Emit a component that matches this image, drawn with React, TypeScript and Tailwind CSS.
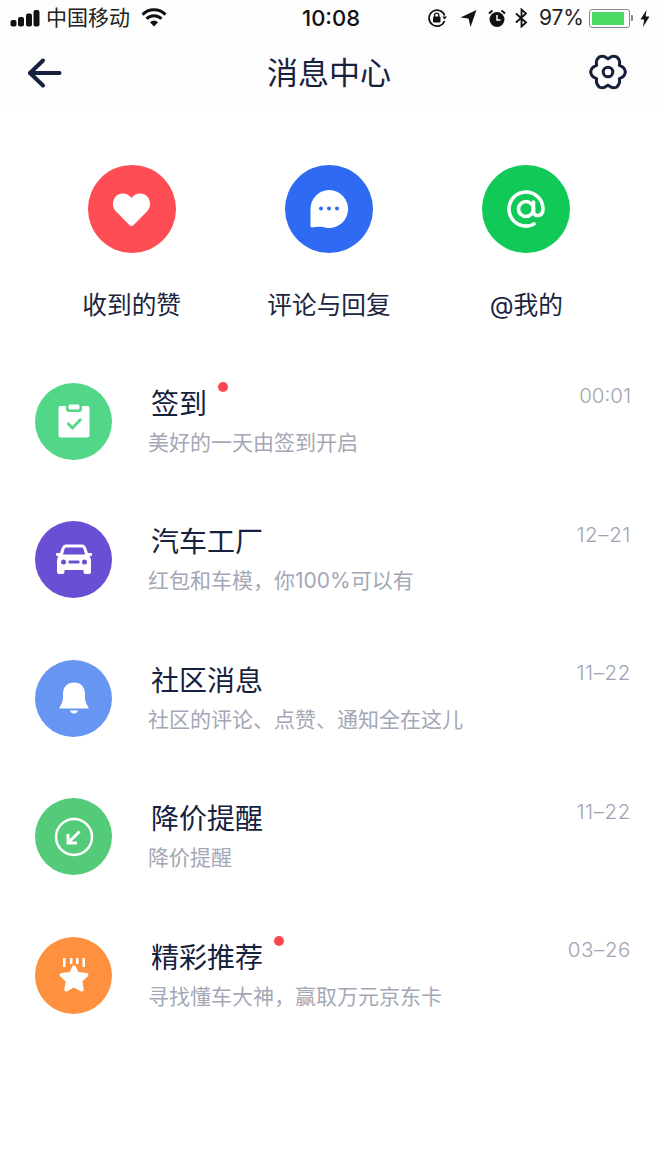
import type { ReactNode } from 'react';

const FONT = "font-['Inter','Noto_Sans_CJK_SC',sans-serif]";

// six rounded lobes, dips at top and bottom
function gearPath() {
  const p = (r: number, deg: number) => {
    const a = (deg * Math.PI) / 180;
    return `${(20 + r * Math.cos(a)).toFixed(2)} ${(20 + r * Math.sin(a)).toFixed(2)}`;
  };
  let d = `M${p(13.2, -30)}`;
  for (let i = 0; i < 6; i++) {
    const a = i * 60;
    d += ` C${p(14, a - 22)} ${p(17.4, a - 21)} ${p(17.4, a)}`;
    d += ` C${p(17.4, a + 21)} ${p(14, a + 22)} ${p(13.2, a + 30)}`;
  }
  return `${d} Z`;
}

function StatusBar() {
  return (
    <div className="flex items-center justify-between h-[36px] pl-[10px] pr-[8px] text-[#111] bg-[#fdfdfd]">
      <div className="flex items-center w-[220px]">
        <svg width="30" height="18" viewBox="0 0 30 18" fill="#111">
          <rect x="0.5" y="11" width="6" height="6.5" rx="2" />
          <rect x="8" y="8" width="6" height="9.5" rx="2" />
          <rect x="16" y="4.5" width="6" height="13" rx="2" />
          <rect x="23.5" y="1" width="6" height="16.5" rx="2" />
        </svg>
        <span className="ml-[6px] text-[21px] leading-[28px] text-[#222]">中国移动</span>
        <svg className="ml-[11px]" width="26" height="20" viewBox="0 0 26 20" fill="none" stroke="#111" strokeWidth="3">
          <path d="M1.5 6.6 A16 16 0 0 1 24.5 6.6" />
          <path d="M5.5 10.8 A10.5 10.5 0 0 1 20.5 10.8" />
          <path d="M13 18.5 L9 14.2 A5.6 5.6 0 0 1 17 14.2 Z" fill="#111" stroke="none" />
        </svg>
      </div>
      <span className="text-[22px] leading-[28px] font-medium text-[#111] absolute left-[302px]">10:08</span>
      <div className="flex items-center">
        <svg width="20" height="20" viewBox="0 0 20 20" fill="none">
          <path d="M17.5 13 A8 8 0 1 1 17.6 7.5" stroke="#111" strokeWidth="1.7" />
          <path d="M15.2 8.5 L20 8.5 L17.6 11.5 Z" fill="#111" />
          <rect x="6" y="8.6" width="7.5" height="6" rx="1" fill="#111" />
          <path d="M7.6 9 V7.2 A2.1 2.1 0 0 1 11.8 7.2 V9" stroke="#111" strokeWidth="1.3" />
        </svg>
        <svg className="ml-[13px]" width="17" height="19" viewBox="0 0 17 19" fill="#111">
          <path d="M16.5 1 L10.5 18 L8.5 9.5 L0.5 8.5 Z" />
        </svg>
        <svg className="ml-[11px]" width="18" height="19" viewBox="0 0 18 19">
          <circle cx="9" cy="10.5" r="7.5" fill="#111" />
          <path d="M9 6 V11 H12.5" stroke="#fff" strokeWidth="1.5" fill="none" />
          <path d="M1 4.5 L4.5 1.5 M17 4.5 L13.5 1.5" stroke="#111" strokeWidth="2" />
        </svg>
        <svg className="ml-[9px]" width="13" height="20" viewBox="0 0 13 20" fill="none" stroke="#111" strokeWidth="1.8">
          <path d="M1 5.5 L11 14.5 L6.5 18.5 V1.5 L11 5.5 L1 14.5" />
        </svg>
        <span className="ml-[11px] text-[21px] leading-[28px] text-[#222]">97%</span>
        <div className="ml-[5px] w-[41px] h-[19px] rounded-[3px] border border-[#8a8a8a] p-[2px]">
          <div className="h-full w-[92%] bg-[#4cd964] rounded-[1px]" />
        </div>
        <div className="ml-[1px] w-[2px] h-[6px] bg-[#8a8a8a] rounded-r-[1px]" />
        <svg className="ml-[7px]" width="10" height="17" viewBox="0 0 10 17" fill="#111">
          <path d="M6.5 0 L0.5 9.5 H4.2 L3 17 L9.5 6.5 H5.6 Z" />
        </svg>
      </div>
    </div>
  );
}

function Header() {
  return (
    <div className="relative flex items-center justify-between h-[74px] pl-[27px] pr-[30px] bg-[#fdfdfd]">
      <svg width="36" height="32" viewBox="0 0 36 32" fill="none" stroke="#16213e" strokeWidth="4" strokeLinecap="round" strokeLinejoin="round">
        <path d="M3 16 H32.5" />
        <path d="M16 3.5 L3 16 L16 28.5" />
      </svg>
      <h1 className="absolute left-0 right-0 text-center text-[31px] leading-[40px] text-[#16213e] pointer-events-none">消息中心</h1>
      <svg className="-mt-[2px]" width="40" height="40" viewBox="0 0 40 40" fill="none" stroke="#16213e" strokeWidth="3" strokeLinejoin="round">
        <path d={gearPath()} />
        <circle cx="20" cy="20" r="4.8" />
      </svg>
    </div>
  );
}

const tabs: { label: string; color: string; icon: ReactNode }[] = [
  {
    label: '收到的赞',
    color: 'bg-[#ff4d55]',
    icon: (
      <svg width="39" height="35" viewBox="0 0 42 38" fill="#fff">
        <path d="M21 37 C20 37 19.5 36.5 19 36 L4 21 C0 17 0 10 3 6 C7 0.5 16 0 21 6.5 C26 0 35 0.5 39 6 C42 10 42 17 38 21 L23 36 C22.5 36.5 22 37 21 37 Z" />
      </svg>
    ),
  },
  {
    label: '评论与回复',
    color: 'bg-[#2f6bf2]',
    icon: (
      <svg width="40" height="40" viewBox="0 0 40 40">
        <path d="M20 1 A19 19 0 1 1 14 38 C10 37.5 5 38.5 3 38.5 C1.5 38.5 1.5 37 1.5 36 L1.5 20 A19 19 0 0 1 20 1 Z" fill="#fff" />
        <circle cx="12" cy="19.5" r="2" fill="#2f6bf2" />
        <circle cx="20" cy="19.5" r="2" fill="#2f6bf2" />
        <circle cx="28" cy="19.5" r="2" fill="#2f6bf2" />
      </svg>
    ),
  },
  {
    label: '@我的',
    color: 'bg-[#10c957]',
    icon: (
      <svg width="38" height="38" viewBox="0 0 38 38" fill="none" stroke="#fff" strokeWidth="3.6" strokeLinecap="round">
        <circle cx="19" cy="19" r="7.5" />
        <path d="M26.5 12 V21.5 C26.5 27.5 36 27 36 19 A17 17 0 1 0 27 34" />
      </svg>
    ),
  },
];

function Tabs() {
  return (
    <div className="grid grid-cols-3 px-[33px] pt-[55px]">
      {tabs.map((t) => (
        <div key={t.label} className="flex flex-col items-center">
          <div className={`w-[88px] h-[88px] rounded-full flex items-center justify-center ${t.color}`}>{t.icon}</div>
          <span className="mt-[35px] text-[24.7px] leading-[34px] text-[#1c2540]">{t.label}</span>
        </div>
      ))}
    </div>
  );
}

const rows: { title: string; sub: string; time: string; color: string; dot?: string; icon: ReactNode }[] = [
  {
    title: '签到',
    sub: '美好的一天由签到开启',
    time: '00:01',
    color: 'bg-[#52d688]',
    dot: 'left-[70px]',
    icon: (
      <svg width="32" height="34" viewBox="0 0 32 34">
        <path d="M2.5 2 H8 V5 A3 3 0 0 0 11 8 H21 A3 3 0 0 0 24 5 V2 H29.5 A2 2 0 0 1 31.5 4 V31.5 A2 2 0 0 1 29.5 33.5 H2.5 A2 2 0 0 1 0.5 31.5 V4 A2 2 0 0 1 2.5 2 Z" fill="#fff" />
        <rect x="10.5" y="0.5" width="11" height="5" rx="1.5" fill="#fff" />
        <path d="M9.5 19 L14.5 24 L23 15" fill="none" stroke="#52d688" strokeWidth="2.8" />
      </svg>
    ),
  },
  {
    title: '汽车工厂',
    sub: '红包和车模，你100%可以有',
    time: '12–21',
    color: 'bg-[#6a4fd4]',
    icon: (
      <svg width="36" height="32" viewBox="0 0 36 32">
        <path d="M10 0.5 H26 C28 0.5 29 1.5 30 3.5 L32 9 H35 A1 1 0 0 1 36 10 V11.5 L33.5 12.5 C34.5 14 35 15 35 17 V28 A2 2 0 0 1 33 30 H29.5 A2 2 0 0 1 27.5 28 V26 H8.5 V28 A2 2 0 0 1 6.5 30 H3 A2 2 0 0 1 1 28 V17 C1 15 1.5 14 2.5 12.5 L0 11.5 V10 A1 1 0 0 1 1 9 H4 L6 3.5 C7 1.5 8 0.5 10 0.5 Z" fill="#fff" />
        <path d="M10.5 3.5 H25.5 C26.5 3.5 27 4 27.5 5 L29 10.5 H7 L8.5 5 C9 4 9.5 3.5 10.5 3.5 Z" fill="#6a4fd4" />
        <circle cx="7.5" cy="18" r="2.5" fill="#6a4fd4" />
        <circle cx="28.5" cy="18" r="2.5" fill="#6a4fd4" />
        <rect x="12.5" y="16.5" width="11" height="3" rx="1" fill="#6a4fd4" />
      </svg>
    ),
  },
  {
    title: '社区消息',
    sub: '社区的评论、点赞、通知全在这儿',
    time: '11–22',
    color: 'bg-[#6695f2]',
    icon: (
      <svg width="30" height="32" viewBox="0 0 30 32" fill="#fff">
        <path d="M15 0.5 C8 0.5 4 5 4 12 V16 C4 20 2 23 0.5 25.5 Q0 26.5 1 26.5 H29 Q30 26.5 29.5 25.5 C28 23 26 20 26 16 V12 C26 5 22 0.5 15 0.5 Z" />
        <path d="M11 28.5 H19 C18.5 30.5 17 31.5 15 31.5 C13 31.5 11.5 30.5 11 28.5 Z" />
      </svg>
    ),
  },
  {
    title: '降价提醒',
    sub: '降价提醒',
    time: '11–22',
    color: 'bg-[#54cb78]',
    icon: (
      <svg width="40" height="40" viewBox="0 0 40 40" fill="none" stroke="#fff">
        <circle cx="20" cy="20" r="18" strokeWidth="2.5" />
        <path d="M25.5 14.5 L15 25" strokeWidth="3" />
        <path d="M14 17 V26 H23" strokeWidth="3" />
      </svg>
    ),
  },
  {
    title: '精彩推荐',
    sub: '寻找懂车大神，赢取万元京东卡',
    time: '03–26',
    color: 'bg-[#fd9140]',
    dot: 'left-[126px]',
    icon: (
      <svg width="30" height="34" viewBox="0 0 30 34" fill="#fff">
        <rect x="4" y="0" width="2.5" height="9" />
        <rect x="11" y="0" width="2.5" height="6" />
        <rect x="17" y="0" width="2.5" height="6" />
        <rect x="23.5" y="0" width="2.5" height="9" />
        <path d="M15 7.5 C16 7.5 16.5 8 17 9 L19.3 14 L27.5 15 C29.5 15.3 30 17 28.8 18.3 L23.3 23.5 L24.7 31 C25 33 23.5 34 21.8 33.2 L15 29.5 L8.2 33.2 C6.5 34 5 33 5.3 31 L6.7 23.5 L1.2 18.3 C0 17 0.5 15.3 2.5 15 L10.7 14 L13 9 C13.5 8 14 7.5 15 7.5 Z" />
      </svg>
    ),
  },
];

function Row({ row }: { row: (typeof rows)[number] }) {
  return (
    <div className="flex items-center h-[138.5px] pl-[35px] pr-[27px]">
      <div className={`w-[77px] h-[77px] shrink-0 rounded-full flex items-center justify-center ${row.color}`}>{row.icon}</div>
      <div className="ml-[36px] flex-1 min-w-0">
        <div className="relative h-[38px] pl-[3px] text-[28px] leading-[38px] text-[#16213e]">
          {row.title}
          {row.dot && <span className={`absolute top-[-3px] w-[10px] h-[10px] rounded-full bg-[#ff4550] ${row.dot}`} />}
        </div>
        <div className="mt-[5px] text-[21px] leading-[30px] text-[#a4a7b5]">{row.sub}</div>
      </div>
      <span className={`self-start mt-[29px] text-[20.5px] leading-[30px] font-light text-[#a0a3b1] ${row.time.includes('–') ? 'tracking-[0.6px]' : ''}`}>{row.time}</span>
    </div>
  );
}

export default function App() {
  return (
    <div className={`relative w-[658px] h-[1170px] bg-white overflow-hidden ${FONT}`}>
      <StatusBar />
      <Header />
      <Tabs />
      <div className="mt-[30px]">
        {rows.map((r) => (
          <Row key={r.title} row={r} />
        ))}
      </div>
    </div>
  );
}
